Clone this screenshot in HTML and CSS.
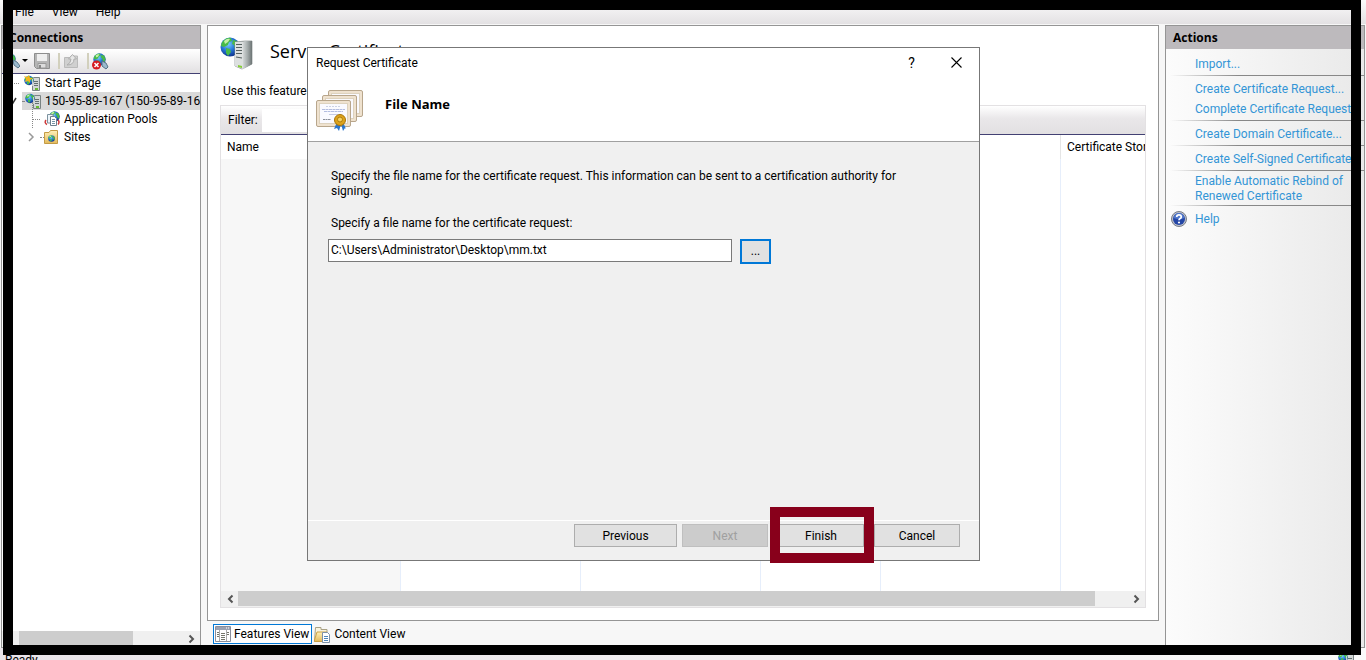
FILE: index.html
```html
<!DOCTYPE html>
<html lang="en">
<head>
<meta charset="utf-8">
<title>Server Certificates</title>
<link rel="stylesheet" href="styles.css">
</head>
<body>
<svg class="defs" aria-hidden="true">
  <defs>
    <radialGradient id="sea" cx=".4" cy=".35" r=".7"><stop offset="0" stop-color="#7ed0ff"/><stop offset=".5" stop-color="#2878d8"/><stop offset="1" stop-color="#0a2c86"/></radialGradient>
    <linearGradient id="steel"><stop offset="0" stop-color="#d2d6d6"/><stop offset=".5" stop-color="#a4abab"/><stop offset="1" stop-color="#6c7474"/></linearGradient>
    <linearGradient id="folder" x2="0" y2="1"><stop offset="0" stop-color="#fff0b8"/><stop offset="1" stop-color="#e3ba5c"/></linearGradient>
    <symbol id="globe" viewBox="0 0 20 20">
      <circle cx="10" cy="10" r="9.5" fill="url(#sea)"/>
      <path d="M3 4Q7 0 11 1L12 4 9 5 8 8 4 10 1 9Q1 6 3 4ZM6 11L10 12 11 15 8 19 6 16ZM13 3L17 4 19 9 18 14 15 12 14 8 12 7Z" fill="#48bb48"/>
      <path d="M4 4Q7 1 10 2L8 5 5 7Z" fill="#c5f2a5"/>
    </symbol>
    <symbol id="server" viewBox="0 0 34 34">
      <use href="#globe" x="0" y="0" width="20" height="20"/>
      <path d="M15 5L25 4 32 4 32 27 22 32 15 29Z" fill="url(#steel)" stroke="#858d8d" stroke-width=".7"/>
      <path d="M15 5L23 5 23 32 15 29Z" fill="#dde0e0"/>
      <path d="M16 7.500H22M16 10.500H22M16 13.500H22M16 16.500H22M16 20L22 21" stroke="#566160" stroke-width="1.200"/>
      <path d="M23 5L25 4 32 4 32 27 23 32Z" fill="url(#steel)"/>
      <path d="M18 28L22 29 22 31 18 30Z" fill="#85ce36"/>
    </symbol>
    <symbol id="smallserver" viewBox="0 0 16 16">
      <path d="M8.500 3.500L10 2.500H15.500V15.500H8.500Z" fill="#d3d7d7" stroke="#7a8383"/>
      <path d="M10 6.500H14M10 8.500H14M10 10.500H14" stroke="#657070"/><path d="M11 13H14V15H11Z" fill="#69bb31"/>
      <use href="#globe" width="10" height="11"/>
      <path d="M8.500 4V11" stroke="#c8cece"/>
    </symbol>
    <symbol id="cert" viewBox="0 0 36 28">
      <rect x=".5" y=".5" width="34" height="26" rx="1.500" fill="#efe2cf" stroke="#b8a68c"/>
      <rect x="3.500" y="3.500" width="28" height="20" fill="#fafaff" stroke="#ddd2be"/>
      <path d="M10 6.500H25" stroke="#cdd3e4" stroke-dasharray="2 1"/><path d="M6 9.500H29M8 11.500H27" stroke="#b3bde0" stroke-dasharray="3 .5"/>
      <path d="M13 14.500H22" stroke="#c5cae2"/><path d="M7 19.500H15" stroke="#888d98" stroke-dasharray="2 .5"/>
    </symbol>
    <symbol id="left" viewBox="0 0 8 10"><path d="M6.500 1.500L3 5 6.500 8.500" fill="none" stroke="#555" stroke-width="2"/></symbol>
    <symbol id="right" viewBox="0 0 8 10"><path d="M1.500 1.500L5 5 1.500 8.500" fill="none" stroke="#555" stroke-width="2"/></symbol>
  </defs>
</svg>

<div class="app">
  <nav class="menubar"><button type="button">File</button><button type="button">View</button><button type="button">Help</button></nav>

  <div class="workspace">
    <aside class="panel connections">
      <h2>Connections</h2>
      <div class="toolbar">
        <button type="button" class="connect" aria-label="Connect"><svg width="16" height="16" viewBox="0 0 16 16"><use href="#globe" width="12" height="12"/><path d="M9 7L13 9 16 13 14 15 10 12Z" fill="#9bb9cd" stroke="#57768a"/></svg><svg width="6" height="4" viewBox="0 0 6 4"><path d="M0 0H6L3 3Z"/></svg></button>
        <button type="button" class="save" aria-label="Save"><svg width="16" height="16" viewBox="0 0 16 16"><path d="M.5.500H15.500V15.500H2.500L.5 13.500Z" fill="#b5b5b5" stroke="#8d8d8d"/><path d="M3 1H13V8H3Z" fill="#eee"/><path d="M4 10.500H12V15H4Z" fill="#ddd" stroke="#999"/><path d="M5 12H7V15H5Z" fill="#888"/></svg></button>
        <span class="divider"></span>
        <button type="button" class="up" aria-label="Up"><svg width="16" height="16" viewBox="0 0 16 16"><path d="M1.500 4.500H7L8 3H14.500V14.500H1.500Z" fill="#d0d0d0" stroke="#bababa"/><path d="M4 12Q8 10 8 6H5.500L9.500 1.500 13.500 6H11Q11 12 4 12Z" fill="#e7e7e7" stroke="#adadad"/></svg></button>
        <span class="divider"></span>
        <button type="button" class="stop" aria-label="Disconnect"><svg width="17" height="17" viewBox="0 0 17 17"><use href="#globe" x="1" width="13" height="13"/><path d="M10 8L14 10 16 14 14 16 10 13Z" fill="#9bb9cd" stroke="#567487"/><circle cx="4.500" cy="12" r="4.500" fill="#d61920"/><path d="M2.500 10L6.500 14M6.500 10L2.500 14" stroke="#fff" stroke-width="1.500"/></svg></button>
      </div>
      <ul class="tree">
        <li class="root"><i class="dots"></i><svg width="16" height="16"><use href="#smallserver"/><path d="M0 1L3 2 5 0 6 3 9 3 6 5 6 8 4 6 1 7 2 4Z" fill="#f3b51b"/></svg><span>Start Page</span></li>
        <li class="host"><svg class="chevron" width="8" height="8" viewBox="0 0 8 8"><path d="M1 2L4 6 7 1" fill="none" stroke="#333" stroke-width="1.500"/></svg><div class="selected"><i class="dots"></i><svg width="16" height="16"><use href="#smallserver"/></svg><span>150-95-89-167 (150-95-89-167\Administrator)</span></div></li>
        <li class="pools"><i class="dots"></i><svg width="16" height="16" viewBox="0 0 16 16"><use href="#globe" x="5" width="11" height="11"/><path d="M2 9Q0 12 3 13.500M14 13.500Q16 11 14 9" fill="none" stroke="#cf3b3b" stroke-width="1.500"/><path d="M3.500 3.500H9V12H3.500Z" fill="#eef5fa" stroke="#7c929f"/><path d="M6.500 5.500H10.500L12.500 7.500V14.500H6.500Z" fill="#fff" stroke="#6d7f8d"/><path d="M8 8.500H11M8 10.500H11M8 12.500H11" stroke="#7794a6"/></svg><span>Application Pools</span></li>
        <li class="sites"><svg class="chevron" width="8" height="10" viewBox="0 0 8 10"><path d="M2 1L6 5 2 9" fill="none" stroke="#999" stroke-width="1.500"/></svg><i class="dots"></i><svg width="15" height="15" viewBox="0 0 15 15"><path d="M.5 2.500H5L6.500.500H13.500V13.500H.5Z" fill="url(#folder)" stroke="#c39b45"/><use href="#globe" x="4" y="5" width="7" height="7"/></svg><span>Sites</span></li>
      </ul>
      <div class="scrollbar"><span class="thumb"></span><button type="button" aria-label="Scroll right"><svg width="8" height="10"><use href="#right"/></svg></button></div>
    </aside>

    <main class="center">
      <section class="feature">
        <header><svg width="34" height="34"><use href="#server"/></svg><h1>Server Certificates</h1></header>
        <p>Use this feature to request and manage certificates that the Web server can use with websites configured for SSL.</p>
        <div class="listing">
          <div class="filter"><label for="filter">Filter:</label><input id="filter" type="text"></div>
          <div class="tablewrap">
            <table>
              <colgroup><col class="c-name"><col class="c-wide"><col class="c-wide"><col class="c-date"><col class="c-wide"><col></colgroup>
              <thead><tr><th>Name</th><th></th><th></th><th></th><th></th><th>Certificate Store</th></tr></thead>
              <tbody><tr><td></td><td></td><td></td><td></td><td></td><td></td></tr></tbody>
            </table>
          </div>
          <div class="scrollbar"><button type="button" aria-label="Scroll left"><svg width="8" height="10"><use href="#left"/></svg></button><span class="thumb"></span><button type="button" aria-label="Scroll right"><svg width="8" height="10"><use href="#right"/></svg></button></div>
        </div>
      </section>
      <div class="views">
        <button type="button" class="active"><svg width="16" height="16" viewBox="0 0 16 16"><path d="M.5.500H15.500V15.500H.5Z" fill="#fff" stroke="#8b8f9c"/><path d="M1 1H15V4H1Z" fill="#9ca2b1"/><path d="M11 2H14" stroke="#fff" stroke-dasharray="1 1"/><path d="M4.500 4V15M11.500 4V15" stroke="#aaa"/><path d="M2 6.500H4M2 8.500H4M2 10.500H4M6 7.500H10M6 9.500H10M6 11.500H10M6 13.500H10M12 6.500H14M12 8.500H14" stroke="#75766b"/></svg>Features View</button>
        <button type="button"><svg width="17" height="17" viewBox="0 0 17 17"><path d="M1.500 1.500H7V3.500H13V15.500H.5Z" fill="#f8f3df" stroke="#a9a184"/><path d="M.5 14L3 6H13V15.500H.5Z" fill="url(#folder)" stroke="#cba246"/><path d="M8.500 6.500H13.500L15.500 8.500V16.500H8.500Z" fill="#fff" stroke="#7d91a7"/><path d="M10 10.500H14M10 12.500H14M10 14.500H14" stroke="#4e86ba"/></svg>Content View</button>
      </div>
    </main>

    <aside class="panel actions">
      <h2>Actions</h2>
      <ul>
        <li class="sep"><a href="#">Import...</a></li>
        <li><a href="#">Create Certificate Request...</a></li>
        <li class="sep last"><a href="#">Complete Certificate Request...</a></li>
        <li class="sep"><a href="#">Create Domain Certificate...</a></li>
        <li class="sep"><a href="#">Create Self-Signed Certificate...</a></li>
        <li class="sep multi"><a href="#">Enable Automatic Rebind of Renewed Certificate</a></li>
        <li class="help"><svg width="16" height="16" viewBox="0 0 16 16"><circle cx="8" cy="8" r="7.500" fill="#bfc2cb" stroke="#777c88"/><circle cx="8" cy="8" r="6" fill="#2446a6"/><path d="M2.500 7Q4 2 8 2T13.500 7Q8 9 2.500 7Z" fill="#5279cd"/><path d="M5.700 6Q5.700 3.800 8 3.800T10.300 6Q10.300 7 8.800 7.800 8 8.300 8 9.300" fill="none" stroke="#fff" stroke-width="1.700"/><circle cx="8" cy="11.500" r="1.100" fill="#fff"/></svg><a href="#">Help</a></li>
      </ul>
    </aside>
  </div>
  <footer class="status"><span>Ready</span><svg width="16" height="16"><use href="#smallserver"/></svg></footer>
</div>

<section class="dialog" role="dialog" aria-label="Request Certificate">
  <div class="titlebar"><span>Request Certificate</span><button type="button" aria-label="Help">?</button><button type="button" aria-label="Close"><svg width="11" height="11" viewBox="0 0 11 11"><path d="M.5.500L10.500 10.500M10.500.500L.5 10.500" stroke="#000" stroke-width="1.100"/></svg></button></div>
  <header><svg width="48" height="42" viewBox="0 0 48 42"><use href="#cert" x="12" y="0" width="36" height="28"/><use href="#cert" x="6" y="5" width="36" height="28"/><use href="#cert" x="0" y="10" width="36" height="28"/><path d="M21 32L18 39 21 38 23 41 25 34 27 41 29 38 30 39 27 32Z" fill="#2b76cd"/><circle cx="24" cy="30" r="5.500" fill="#dda31b" stroke="#a97408"/><circle cx="24" cy="29.500" r="2.500" fill="#f5d263" stroke="#ad7b0c"/></svg><h2>File Name</h2></header>
  <form class="body">
    <p>Specify the file name for the certificate request. This information can be sent to a certification authority for signing.</p>
    <label for="path">Specify a file name for the certificate request:</label>
    <div class="field"><input id="path" type="text" value="C:\Users\Administrator\Desktop\mm.txt"><button type="button">...</button></div>
  </form>
  <footer><button type="button" class="previous">Previous</button><button type="button" disabled>Next</button><div class="finish"><button type="button">Finish</button><span class="highlight"></span></div><button type="button">Cancel</button></footer>
</section>
<div class="frame"></div>
</body>
</html>
```
FILE: styles.css
```css
* { box-sizing: border-box; }
body { margin: 0; font: 12px/16px Roboto, "Open Sans", sans-serif; color: #000; background: #f7f7f7; overflow: hidden; }
button, input { font: inherit; color: inherit; }
button { padding: 0; border: 0; background: none; }
h1, h2, p, ul { margin: 0; padding: 0; }
h1, h2 { font-family: "Open Sans", "Noto Sans", sans-serif; }
ul { list-style: none; }
svg { flex: none; display: block; }
.defs { position: absolute; width: 0; height: 0; }
.app { height: 100vh; display: flex; flex-direction: column; }
.menubar { height: 24px; flex: none; display: flex; align-items: center; gap: 18px; padding-left: 15px; background: linear-gradient(#fbfbfb, #e3e1e3); }
.workspace { flex: 1; min-height: 0; display: flex; margin: 1px 1px 0; }
.panel { flex: none; width: 200px; display: flex; flex-direction: column; border: 1px solid #959595; background: #fff; overflow: hidden; }
.panel h2 { flex: none; padding: 4px 7px 3px; font-size: 12px; line-height: 16px; background: #bdbabd; }
.toolbar { flex: none; height: 25px; display: flex; align-items: center; padding-left: 2px; border-bottom: 1px solid #424173; background: linear-gradient(#fff, #e2e0e2); }
.connect { display: flex; align-items: center; gap: 2px; }
.save { margin-left: 6px; }
.divider { width: 2px; height: 16px; margin: 0 3px 0 8px; background: #d2d0bd; }
.tree { flex: 1; white-space: nowrap; }
.tree li { height: 18px; display: flex; align-items: center; gap: 5px; }
.dots { flex: none; width: 10px; height: 1px; border-top: 1px dotted #888; }
.root { padding-left: 7px; }
.host { padding-left: 7px; }
.selected { flex: 1; height: 18px; display: flex; align-items: center; gap: 4px; overflow: hidden; background: #d9d9d9; }
.selected .dots { width: 2px; margin-right: -3px; }
.tree .pools { position: relative; padding-left: 31px; gap: 4px; }
.pools::before { content: ""; position: absolute; left: 30px; top: -8px; height: 26px; border-left: 1px dotted #888; }
.pools .dots { width: 7px; }
.tree .sites { padding-left: 25px; }
.sites .dots { width: 4px; margin-right: -5px; }
.scrollbar { flex: none; height: 16px; display: flex; align-items: flex-start; background: #f0f0f0; }
.scrollbar button { width: 17px; height: 15px; display: flex; align-items: center; justify-content: center; }
.scrollbar .thumb { height: 15px; background: #cdcdcd; }
.connections .scrollbar { padding-left: 17px; justify-content: space-between; }
.connections .thumb { width: 63%; }
.center { flex: 1; min-width: 0; display: flex; flex-direction: column; padding: 0 6px; }
.feature { flex: 1; min-height: 0; display: flex; flex-direction: column; padding: 11px 12px 12px; border: 1px solid #959595; background: #fff; }
.feature header { flex: none; display: flex; align-items: flex-start; gap: 16px; height: 34px; }
.feature h1 { font-size: 18px; line-height: 28px; font-weight: 400; }
.feature p { flex: none; padding: 12px 3px 6px; white-space: nowrap; overflow: hidden; }
.listing { flex: 1; min-height: 0; display: flex; flex-direction: column; border: 1px solid #e3e1e3; }
.filter { flex: none; height: 29px; display: flex; align-items: center; gap: 4px; padding-left: 7px; border-bottom: 1px solid #424173; background: linear-gradient(#fff, #e9e7e9 45%, #e2e0e2); }
.filter input { width: 240px; height: 23px; border: 0; background: #fff; }
.tablewrap { flex: 1; min-height: 0; overflow: hidden; }
table { width: 100%; height: 100%; table-layout: fixed; border-collapse: separate; border-spacing: 0; }
.c-name, .c-wide { width: 180px; }
.c-date { width: 120px; }
th { height: 24px; padding: 0 6px; font-weight: 400; text-align: left; white-space: nowrap; overflow: hidden; border-right: 1px solid #e5e5e5; }
td { padding: 0; border-right: 1px solid #e6eefb; }
th:last-child, td:last-child { border-right: 0; padding-right: 0; }
td:first-child { background: #f7f7f7; }
.listing .thumb { flex: 1; margin-right: 33px; }
.views { flex: none; height: 27px; display: flex; align-items: flex-start; gap: 2px; padding: 3px 6px; }
.views button { height: 20px; display: flex; align-items: center; gap: 3px; border: 1px solid transparent; }
.views .active { padding: 0 2px 0 1px; background: #fff; border-color: #0078d7; }
.views .active + button { border-width: 1px 0; }
.actions { background: linear-gradient(90deg, #fcfcfc, #e9e9e9); }
.actions ul { padding: 1px 0 0 4px; line-height: 15px; }
.actions li { padding: 3px 0 2px 25px; white-space: nowrap; }
.actions .sep { padding: 7px 0 4px 25px; margin-bottom: 3px; background: linear-gradient(90deg, transparent, #888 35%, #888) bottom / 100% 1px no-repeat; }
.actions .sep + li { padding-top: 3px; }
.actions .last { padding-top: 3px; }
.actions .sep + .multi { width: 190px; white-space: normal; padding: 0 8px 2px 25px; margin-bottom: 2px; }
.actions .help { display: flex; align-items: center; gap: 8px; padding-left: 1px; }
a { color: #3395d6; text-decoration: none; }
.status { flex: none; height: 12px; display: flex; justify-content: space-between; align-items: flex-start; padding: 4px 12px 0 5px; overflow: hidden; background: linear-gradient(90deg, #e8e3e8, #fafafa); }

.dialog { position: absolute; top: 47px; left: calc(50% - 376px); width: 673px; height: 514px; display: flex; flex-direction: column; border: 1px solid #777; background: #f0f0f0; }
.titlebar { flex: none; height: 29px; display: flex; align-items: center; background: #fff; padding-left: 8px; }
.titlebar span { flex: 1; }
.titlebar button { width: 45px; height: 29px; display: flex; align-items: center; justify-content: center; }
.titlebar button:nth-of-type(1) { font-size: 14px; }
.dialog header { flex: none; height: 65px; display: flex; align-items: flex-start; gap: 21px; padding: 13px 8px 0; background: #fff; border-bottom: 1px solid #a0a0a0; }
.dialog h2 { font-size: 13px; line-height: 18px; padding-top: 5px; }
.body { flex: 1; padding: 27px 20px 0; line-height: 15px; }
.body p { padding: 0 50px 0 3px; }
.body label { display: block; padding: 17px 3px 8px; }
.field { display: flex; gap: 8px; }
.field input { width: 404px; height: 23px; padding: 0 2px 1px; border: 1px solid #7a7a7a; background: #fff; }
.field button { width: 31px; height: 25px; border: 2px solid #0078d7; background: #e1e1e1; }
.dialog footer { flex: none; height: 40px; display: flex; align-items: flex-start; justify-content: flex-end; gap: 5px; padding: 3px 19px 0; border-top: 1px solid #fff; }
.dialog footer button { display: block; width: 86px; height: 23px; border: 1px solid #adadad; background: #e1e1e1; }
.dialog footer .previous { width: 103px; }
.dialog footer button:disabled { color: #a0a0a0; background: #ccc; border-color: #bfbfbf; }
.finish { position: relative; margin: 0 5px; }
.highlight { position: absolute; inset: -17px -10px -16px -8px; border: 10px solid #88001b; pointer-events: none; }
.frame { position: fixed; inset: 0 5px 5px 3px; border: 10px solid #000; pointer-events: none; }
```
